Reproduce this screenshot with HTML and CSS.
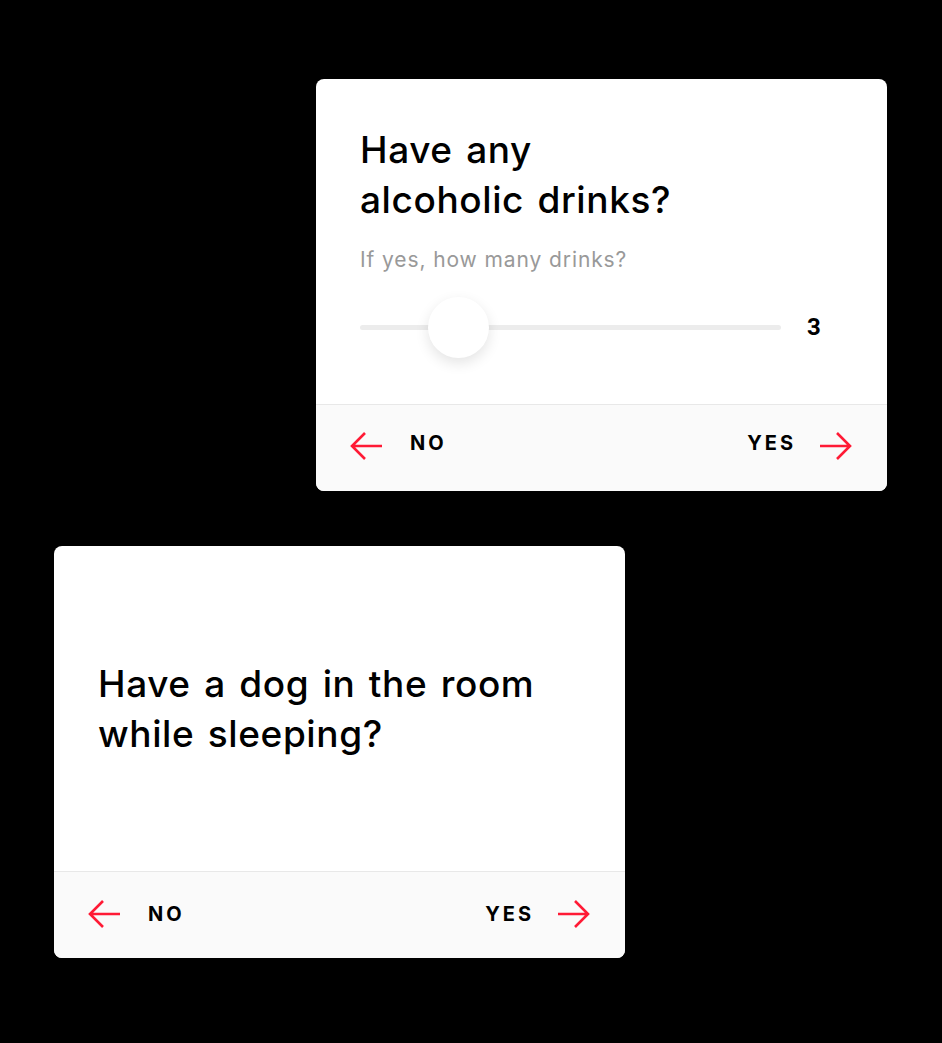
FILE: index.html
```html
<!DOCTYPE html>
<html>
<head>
<meta charset="utf-8">
<link rel="stylesheet" href="styles.css">
</head>
<body>
<div class="stage">
  <div class="card card-top">
    <div class="body body-slider">
      <h2 class="q">Have any<br>alcoholic drinks?</h2>
      <p class="sub">If yes, how many drinks?</p>
      <div class="slider">
        <div class="track"><div class="thumb" style="left: 68px"></div></div>
        <span class="val">3</span>
      </div>
    </div>
    <div class="foot">
      <div class="btn btn-no">
        <svg class="arrow" viewBox="0 0 34 28" width="34" height="28"><path d="M32 14H2M15 1L2 14L15 27" /></svg>
        <span class="lbl">NO</span>
      </div>
      <div class="btn btn-yes">
        <span class="lbl">YES</span>
        <svg class="arrow" viewBox="0 0 34 28" width="34" height="28"><path d="M2 14H32M19 1L32 14L19 27" /></svg>
      </div>
    </div>
  </div>

  <div class="card card-bottom">
    <div class="body body-center">
      <h2 class="q">Have a dog in the room<br>while sleeping?</h2>
    </div>
    <div class="foot">
      <div class="btn btn-no">
        <svg class="arrow" viewBox="0 0 34 28" width="34" height="28"><path d="M32 14H2M15 1L2 14L15 27" /></svg>
        <span class="lbl">NO</span>
      </div>
      <div class="btn btn-yes">
        <span class="lbl">YES</span>
        <svg class="arrow" viewBox="0 0 34 28" width="34" height="28"><path d="M2 14H32M19 1L32 14L19 27" /></svg>
      </div>
    </div>
  </div>
</div>
</body>
</html>
```
FILE: styles.css
```css
html, body {
  margin: 0;
  padding: 0;
  background: #000;
}
.stage {
  width: 942px;
  height: 1043px;
  display: flex;
  flex-direction: column;
  padding-top: 79px;
  box-sizing: border-box;
  font-family: "Inter", "Noto Sans", sans-serif;
}
.card {
  width: 571px;
  height: 412px;
  background: #fff;
  border-radius: 8px;
  overflow: hidden;
  display: flex;
  flex-direction: column;
}
.card-top {
  margin-left: 316px;
}
.card-bottom {
  margin-left: 54px;
  margin-top: 55px;
}
.body {
  flex: 1;
  padding: 0 44px;
  display: flex;
  flex-direction: column;
}
.body-slider {
  padding-top: 46px;
}
.body-center {
  justify-content: center;
}
.q {
  margin: 0;
  font-size: 37px;
  line-height: 50px;
  font-weight: 500;
  color: #000;
  letter-spacing: 0.6px;
  word-spacing: 3px;
}
.sub {
  margin: 20px 0 0 0;
  font-size: 21px;
  line-height: 30px;
  color: #999;
  font-weight: 400;
  letter-spacing: 0.9px;
}
.slider {
  display: flex;
  align-items: center;
  margin-top: 39px;
}
.track {
  position: relative;
  width: 421px;
  height: 5px;
  border-radius: 3px;
  background: #ececec;
}
.thumb {
  position: absolute;
  top: 50%;
  width: 61px;
  height: 61px;
  margin-top: -30.5px;
  border-radius: 50%;
  background: #fff;
  box-shadow: 0 5px 14px rgba(0,0,0,0.11);
}
.val {
  margin-left: 26px;
  font-family: "Roboto", sans-serif;
  font-weight: 700;
  font-size: 24px;
  line-height: 26px;
  color: #000;
}
.foot {
  height: 87px;
  box-sizing: border-box;
  border-top: 1px solid #e8e8e8;
  background: #fafafa;
  display: flex;
  align-items: center;
  justify-content: space-between;
  padding: 0 35px 3px 34px;
}
.card-top .foot {
  padding-bottom: 5px;
}
.btn {
  display: flex;
  align-items: center;
}
.btn-no {
  gap: 26px;
}
.btn-yes {
  gap: 22px;
}
.lbl {
  font-family: "Inter", sans-serif;
  font-weight: 700;
  font-size: 20px;
  line-height: 24px;
  letter-spacing: 3px;
  color: #000;
}
.card-top .lbl {
  margin-bottom: 5px;
}
.arrow path {
  fill: none;
  stroke: #ff1a35;
  stroke-width: 2.6;
}
```
